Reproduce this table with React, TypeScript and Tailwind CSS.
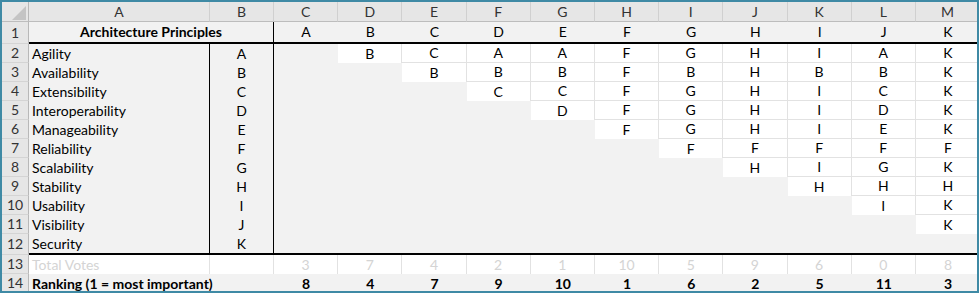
import React from "react";

const columns = ["A", "B", "C", "D", "E", "F", "G", "H", "I", "J", "K", "L", "M"];
const codes = "ABCDEFGHIJK".split("");

const principles = [
  "Agility",
  "Availability",
  "Extensibility",
  "Interoperability",
  "Manageability",
  "Reliability",
  "Scalability",
  "Stability",
  "Usability",
  "Visibility",
  "Security",
];

// winner of each pairwise comparison, row vs column ("-" = no comparison)
const matchups = [
  "-BCAAFGHIAK",
  "--BBBFBHBBK",
  "---CCFGHICK",
  "----DFGHIDK",
  "-----FGHIEK",
  "------FFFFF",
  "-------HIGK",
  "--------HHH",
  "---------IK",
  "----------K",
  "-----------",
];

const totals = [3, 7, 4, 2, 1, 10, 5, 9, 6, 0, 8];
const ranking = [8, 4, 7, 9, 10, 1, 6, 2, 5, 11, 3];

const headerCell =
  "flex items-center justify-center bg-[#e6e6e6] text-[#333] border-r border-[#d0d0d0]";

function RowHeader({ n }: { readonly n: number }) {
  return (
    <div className="flex items-center justify-center bg-[#e6e6e6] text-[#333] border-b border-r border-b-[#d4d4d4] border-r-[#b8b8b8]">
      {n}
    </div>
  );
}

export default function App(): React.JSX.Element {
  return (
    <div className="h-[293px] w-[979px] border-2 border-[#3f8aa5] bg-white text-[14px] leading-none text-black font-[Lato,'Liberation_Sans',sans-serif]">
      <div className="h-full w-full overflow-hidden">
        <div className="grid w-max grid-cols-[27px_181px_64px_repeat(11,64.2px)] grid-rows-[20px_22px_repeat(10,19px)_21px_19px_19px]">
          {/* corner + column letters */}
          <div className="relative bg-[#e6e6e6] border-b border-r border-b-[#bdbdbd] border-r-[#b8b8b8]">
            <svg className="absolute right-[2px] bottom-[1px]" width="14" height="14" viewBox="0 0 14 14">
              <polygon points="14,0 14,14 0,14" fill="#c4c4c4" />
            </svg>
          </div>
          {columns.map((c) => (
            <div key={c} className={`${headerCell} border-b border-b-[#bdbdbd]`}>
              {c}
            </div>
          ))}

          {/* row 1 */}
          <RowHeader n={1} />
          <div className="col-span-2 flex items-center justify-center bg-[#f2f2f2] font-bold border-b-2 border-r border-black">
            Architecture Principles
          </div>
          {codes.map((c) => (
            <div key={c} className="flex items-center justify-center bg-[#f2f2f2] border-b-2 border-black">
              {c}
            </div>
          ))}

          {/* rows 2-12 */}
          {principles.map((name, r) => {
            const last = r === principles.length - 1;
            const edge = last ? "border-b-2 border-b-black" : "";
            return (
              <React.Fragment key={name}>
                <RowHeader n={r + 2} />
                <div className={`flex items-center bg-[#f2f2f2] pl-[3px] border-r border-r-black ${edge}`}>
                  {name}
                </div>
                <div className={`flex items-center justify-center bg-[#f2f2f2] border-r border-r-black ${edge}`}>
                  {codes[r]}
                </div>
                {codes.map((_, c) => {
                  const v = matchups[r][c];
                  if (v === "-") {
                    return <div key={c} className={`bg-[#f2f2f2] ${edge}`} />;
                  }
                  const right = c < codes.length - 1 ? "border-r border-r-[#e2e2e2]" : "";
                  const below = matchups[r + 1]?.[c] !== "-" ? "border-b border-b-[#e2e2e2]" : "";
                  return (
                    <div key={c} className={`flex items-center justify-center bg-white ${right} ${below}`}>
                      {v}
                    </div>
                  );
                })}
              </React.Fragment>
            );
          })}

          {/* row 13 */}
          <RowHeader n={13} />
          <div className="flex items-center bg-white pl-[3px] text-[#d4d4d4] border-r border-r-[#e2e2e2]">
            Total Votes
          </div>
          <div className="bg-white border-r border-r-[#e2e2e2]" />
          {totals.map((t, i) => (
            <div
              key={i}
              className={`flex items-center justify-center bg-white text-[#d4d4d4] ${i < totals.length - 1 ? "border-r border-r-[#e2e2e2]" : ""}`}
            >
              {t}
            </div>
          ))}

          {/* row 14: label spills over the empty B cell */}
          <RowHeader n={14} />
          <div className="col-span-2 flex items-center whitespace-nowrap bg-[#f2f2f2] pl-[3px] font-bold">
            Ranking (1 = most important)
          </div>
          {ranking.map((n, i) => (
            <div key={i} className="flex items-center justify-center bg-[#f2f2f2] font-bold">
              {n}
            </div>
          ))}
        </div>
      </div>
    </div>
  );
}
